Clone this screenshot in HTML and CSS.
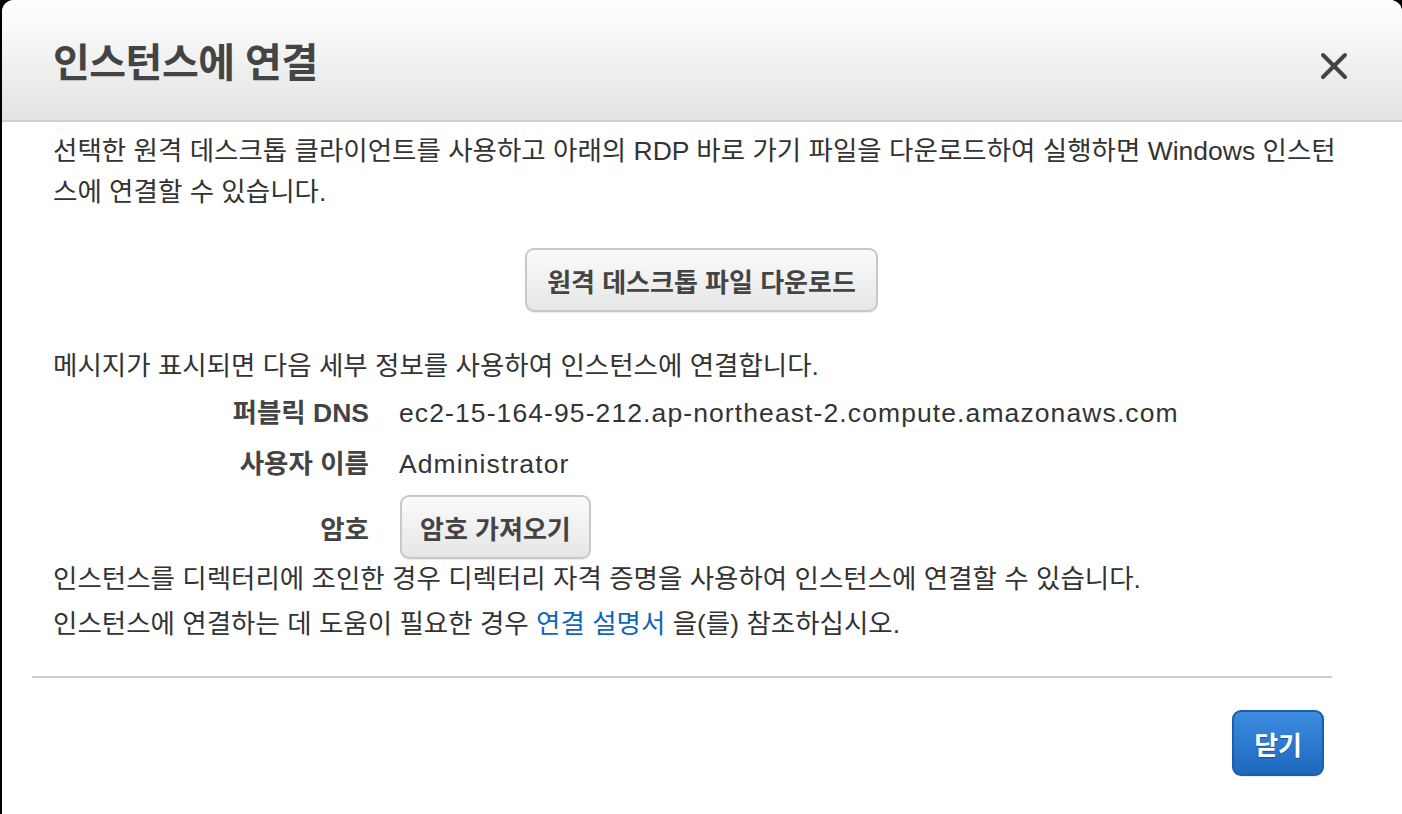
FILE: index.html
```html
<!DOCTYPE html>
<html lang="ko">
<head>
    <meta charset="UTF-8" />
    <title>인스턴스에 연결</title>
    <link rel="stylesheet" href="styles.css">
</head>
<body>

<div class="modal">
    <div class="modal-header">
        <h1>인스턴스에 연결</h1>
        <button class="close-x" aria-label="닫기">
            <svg width="28" height="28" viewBox="0 0 28 28">
                <path d="M3 3 L25 25 M25 3 L3 25" stroke="#444" stroke-width="4" stroke-linecap="round" fill="none"/>
            </svg>
        </button>
    </div>

    <div class="modal-body">
        <p class="intro">선택한 원격 데스크톱 클라이언트를 사용하고 아래의 RDP 바로 가기 파일을 다운로드하여 실행하면 Windows 인스턴스에 연결할 수 있습니다.</p>

        <div class="download-row">
            <button class="btn">원격 데스크톱 파일 다운로드</button>
        </div>

        <p class="line">메시지가 표시되면 다음 세부 정보를 사용하여 인스턴스에 연결합니다.</p>

        <div class="details">
            <div class="label">퍼블릭 DNS</div>
            <div class="value latin">ec2-15-164-95-212.ap-northeast-2.compute.amazonaws.com</div>
            <div class="label">사용자 이름</div>
            <div class="value latin">Administrator</div>
            <div class="label">암호</div>
            <div class="value"><button class="btn btn-small">암호 가져오기</button></div>
        </div>

        <p class="line">인스턴스를 디렉터리에 조인한 경우 디렉터리 자격 증명을 사용하여 인스턴스에 연결할 수 있습니다.</p>
        <p class="line line-gap">인스턴스에 연결하는 데 도움이 필요한 경우 <a href="#">연결 설명서</a> 을(를) 참조하십시오.</p>
    </div>

    <div class="modal-footer">
        <button class="btn btn-primary">닫기</button>
    </div>
</div>

</body>
</html>
```

FILE: styles.css
```css
html, body {
    margin: 0;
    height: 100%;
}

body {
    background: #000;
    font-family: "Liberation Sans", "Noto Sans CJK KR", sans-serif;
    color: #333;
    overflow: hidden;
}

.modal {
    margin-left: 2px;
    height: 100%;
    background: #fff;
    border-radius: 12px 12px 0 0;
    overflow: hidden;
}

.modal-header {
    height: 120px;
    border-bottom: 2px solid #d0d0d0;
    background: linear-gradient(#ffffff, #e3e3e3);
    display: flex;
    align-items: center;
    justify-content: space-between;
    padding: 0 54px 0 51px;
}

.modal-header h1 {
    margin: 0;
    font-size: 40px;
    font-weight: bold;
    color: #444;
    letter-spacing: -0.5px;
}

.close-x {
    background: none;
    border: none;
    padding: 0;
    margin-top: 14px;
    cursor: pointer;
}

.modal-body {
    padding: 9px 52px 0 51px;
    font-size: 26.5px;
    line-height: 41px;
}

.modal-body p {
    margin: 0;
}

.download-row {
    display: flex;
    justify-content: center;
    margin: 35px 0 34px;
}

.btn {
    font-family: inherit;
    font-size: 26px;
    font-weight: bold;
    color: #444;
    background: linear-gradient(#fbfbfb, #e6e6e6);
    border: 2px solid #c8c8c8;
    border-radius: 9px;
    height: 64px;
    padding: 0 20px;
    box-shadow: 0 1px 1px rgba(0, 0, 0, 0.08);
    cursor: pointer;
}

.details {
    display: grid;
    grid-template-columns: 316px 1fr;
    column-gap: 30px;
    row-gap: 10px;
    align-items: baseline;
    margin: 6px 0 0;
}

.details .label {
    text-align: right;
    font-weight: bold;
    color: #444;
}

.details .value {
    color: #333;
}

.details .latin {
    letter-spacing: 1.1px;
}

.btn-small {
    padding: 0 18px;
    margin-left: 1px;
}

.line-gap {
    margin-top: 4px !important;
}

a {
    color: #1166bb;
    text-decoration: none;
}

.modal-footer {
    margin: 31px 70px 0 30px;
    border-top: 2px solid #cccccc;
    padding-top: 32px;
    display: flex;
    justify-content: flex-end;
}

.btn-primary {
    color: #fff;
    background: linear-gradient(#3d8ce0, #1e68bd);
    border: 2px solid #1a5fae;
    height: 66px;
    padding: 0 20px;
    margin-right: 8px;
    text-shadow: 0 1px 1px rgba(0, 0, 0, 0.3);
}
```
